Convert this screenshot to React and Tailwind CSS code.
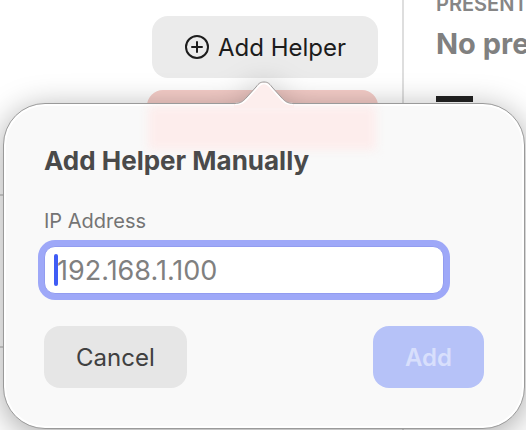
import { useState } from "react";

function PopoverArrow() {
  return (
    <svg
      className="absolute -top-[23px] left-1/2 -translate-x-1/2"
      width="60"
      height="28"
      viewBox="0 0 60 28"
      fill="none"
      aria-hidden="true"
    >
      <path
        d="M0 28V23C8 23 10 20 13 17L22 7C25 3 26.500 2 30 2C33.500 2 35 3 38 7L47 17C50 20 52 23 60 23V28Z"
        fill="#fdeeed"
      />
      <path
        d="M1 24.500C9 24.500 11 21 14 18L22.500 8.500C25.500 4.500 27 3.500 30 3.500C33 3.500 34.500 4.500 37.500 8.500L46 18C49 21 51 24.500 59 24.500"
        stroke="#ffffff"
        strokeWidth="1.500"
      />
      <path
        d="M0 23.500C8 23.500 10 20 13 17L22 7C25 3 26.500 2 30 2C33.500 2 35 3 38 7L47 17C50 20 52 23.500 60 23.500"
        stroke="#9a9a9a"
        strokeWidth="1"
      />
    </svg>
  );
}

function AddHelperPopover() {
  const [ip, setIp] = useState("");

  return (
    <div
      role="dialog"
      aria-labelledby="popover-title"
      className="absolute top-[103px] left-[3px] right-px drop-shadow-[0_6px_16px_rgba(0,0,0,0.35)]"
    >
      <div className="relative overflow-hidden rounded-[42px] border border-[#9a9a9a] bg-[#f9f9f9] px-10 pt-[41px] pb-10 shadow-[inset_0_0_0_2px_#ffffff]">
        <div className="absolute top-0.5 left-36 right-[148px] h-11 bg-[#fdedec] blur-[5px]"></div>

        <h2 id="popover-title" className="relative text-[26px] leading-8 font-bold text-[#4a4a4a]">
          Add Helper Manually
        </h2>

        <form onSubmit={(e) => e.preventDefault()}>
          <label htmlFor="ip" className="mt-8 block text-xl leading-6 text-[#747474]">
            IP Address
          </label>
          <div className="relative mt-[13px] mr-10">
            <input
              id="ip"
              type="text"
              placeholder="192.168.1.100"
              value={ip}
              onChange={(e) => setIp(e.target.value)}
              className="block h-12 w-full rounded-[11px] border border-[#929cf0] bg-white px-3 text-[27px] text-[#4a4a4a] caret-transparent ring-6 ring-[#9ea8f8] outline-none placeholder:text-[#808080]"
            />
            <span className="absolute top-2 left-2.5 h-8 w-1 rounded-full bg-[#3f5cf5]"></span>
          </div>

          <div className="mt-8 flex justify-between">
            <button
              type="button"
              className="h-[62px] rounded-2xl bg-[#e6e6e6] px-8 pt-0.5 text-2xl text-[#404040]"
            >
              Cancel
            </button>
            <button
              type="submit"
              disabled
              className="h-[62px] rounded-2xl bg-[#b6c2f8] px-8 pt-0.5 text-2xl font-semibold text-[#d8dffc]"
            >
              Add
            </button>
          </div>
        </form>
      </div>
      <PopoverArrow />
    </div>
  );
}

export default function App() {
  return (
    <div className="relative min-h-screen overflow-hidden bg-white font-['Inter',sans-serif]">
      <div className="flex min-h-screen">
        <main className="flex flex-1 flex-col border-r-2 border-[#dedede] pt-4">
          <div className="flex flex-col items-end gap-3 pr-6">
            <button
              type="button"
              className="flex h-[62px] items-center gap-2 rounded-2xl bg-[#ebebeb] px-8 pt-0.5 text-2xl text-[#1c1c1c]"
            >
              <svg width="26" height="26" viewBox="0 0 26 26" fill="none" stroke="currentColor" strokeWidth="2" strokeLinecap="round" aria-hidden="true">
                <circle cx="13" cy="12" r="11" />
                <path d="M13 7v10M8 12h10" />
              </svg>
              Add Helper
            </button>
            <div className="h-[60px] w-[231px] rounded-2xl bg-[#f5cdc8]"></div>
          </div>
          <div className="mt-11 h-[154px] border-y-2 border-[#d4d4d4]"></div>
        </main>

        <aside className="w-[122px] overflow-hidden pl-8 whitespace-nowrap">
          <p className="-mt-2 text-xl leading-6 font-semibold text-[#868686]">PRESENT</p>
          <p className="mt-2 text-[29px] leading-10 font-bold text-[#808080]">No pre</p>
          <div className="mt-8 h-1.5 w-[37px] bg-[#222222]"></div>
        </aside>
      </div>

      <AddHelperPopover />
    </div>
  );
}
